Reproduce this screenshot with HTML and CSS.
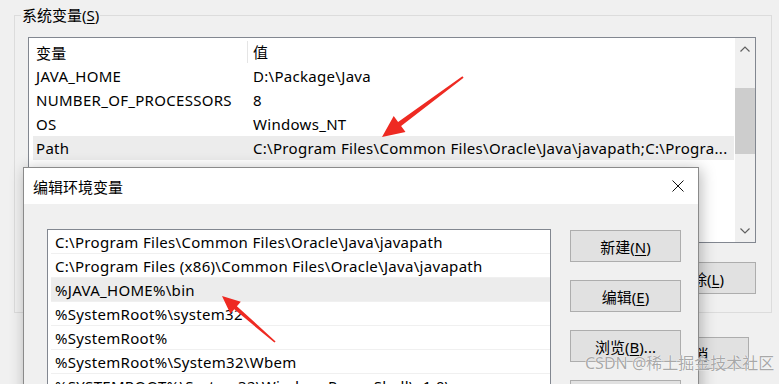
FILE: index.html
```html
<!DOCTYPE html>
<html lang="zh-CN">
<head>
<meta charset="utf-8">
<title>环境变量</title>
<link rel="stylesheet" href="styles.css">
</head>
<body>
<div class="screen">
  <fieldset class="group">
    <legend class="group-title">系统变量(<u>S</u>)</legend>
    <div class="listbox">
      <div class="table">
        <div class="row head"><span class="c1">变量</span><span class="c2">值</span></div>
        <div class="row"><span class="c1">JAVA_HOME</span><span class="c2">D:\Package\Java</span></div>
        <div class="row"><span class="c1">NUMBER_OF_PROCESSORS</span><span class="c2">8</span></div>
        <div class="row"><span class="c1">OS</span><span class="c2">Windows_NT</span></div>
        <div class="row sel"><span class="c1">Path</span><span class="c2">C:\Program Files\Common Files\Oracle\Java\javapath;C:\Progra...</span></div>
      </div>
      <div class="vscroll">
        <div class="sbtn"><svg width="10" height="6" viewBox="0 0 10 6"><path d="M0.5 5.5 L5 1 L9.5 5.5" fill="none" stroke="#606060" stroke-width="1.2"/></svg></div>
        <div class="track"><div class="thumb"></div></div>
        <div class="sbtn"><svg width="10" height="6" viewBox="0 0 10 6"><path d="M0.5 0.5 L5 5 L9.5 0.5" fill="none" stroke="#606060" stroke-width="1.2"/></svg></div>
      </div>
    </div>
    <div class="group-buttons">
      <button class="btn">新建(<u>W</u>)...</button>
      <button class="btn">编辑(<u>I</u>)...</button>
      <button class="btn">删除(<u>L</u>)</button>
    </div>
  </fieldset>
  <div class="footer-buttons">
    <button class="btn">确定</button>
    <button class="btn">取消</button>
  </div>
</div>

<div class="dialog">
  <div class="titlebar">
    <span class="title">编辑环境变量</span>
    <svg class="close" width="12" height="12" viewBox="0 0 12 12"><path d="M0.5 0.5 L11.5 11.5 M11.5 0.5 L0.5 11.5" stroke="#111" stroke-width="1"/></svg>
  </div>
  <div class="dbody">
    <div class="plist">
      <div class="prow">C:\Program Files\Common Files\Oracle\Java\javapath</div>
      <div class="prow">C:\Program Files (x86)\Common Files\Oracle\Java\javapath</div>
      <div class="prow sel">%JAVA_HOME%\bin</div>
      <div class="prow">%SystemRoot%\system32</div>
      <div class="prow">%SystemRoot%</div>
      <div class="prow">%SystemRoot%\System32\Wbem</div>
      <div class="prow">%SYSTEMROOT%\System32\WindowsPowerShell\v1.0\</div>
    </div>
    <div class="dbuttons">
      <button class="btn">新建(<u>N</u>)</button>
      <button class="btn">编辑(<u>E</u>)</button>
      <button class="btn">浏览(<u>B</u>)...</button>
      <button class="btn">删除(<u>D</u>)</button>
    </div>
  </div>
</div>

<svg class="annot" width="779" height="384" viewBox="0 0 779 384">
  <polygon fill="#ee2a22" points="382,137 405.5,131.9 401.1,125.9 463.6,77.8 462.4,76.2 398.1,121.9 393.7,115.9"/>
  <polygon fill="#ee2a22" points="222,296 240.8,301.8 236.9,306.3 275.6,341.4 274.4,342.6 234.3,309.3 230.4,313.8"/>
</svg>

<div class="watermark">CSDN @稀土掘金技术社区</div>
</body>
</html>
```

FILE: styles.css
```css
* { box-sizing: border-box; }

html, body {
  margin: 0;
  padding: 0;
  width: 779px;
  height: 384px;
  overflow: hidden;
  background: #f0f0f0;
  font-family: "Noto Sans", "Noto Sans CJK SC", sans-serif;
  font-size: 15px;
  letter-spacing: 0.3px;
  color: #000;
}

.screen {
  padding: 5px 7px 0 14px;
}

.group {
  margin: 0;
  border: 1px solid #dcdcdc;
  padding: 12px 15px 18px 13px;
  min-width: 0;
}

.group-title {
  margin-left: -7px;
  padding: 0 1px;
  font-size: 15px;
  line-height: 20px;
  letter-spacing: 0;
}

u { text-decoration: underline; text-underline-offset: 2px; }

.listbox {
  display: flex;
  height: 206px;
  border: 1px solid #828790;
  background: #fff;
}

.table {
  flex: 1;
  min-width: 0;
  overflow: hidden;
}

.row {
  display: flex;
  height: 24px;
  align-items: center;
  margin: 0 1px 0 4px;
  white-space: nowrap;
}

.row.head {
  height: 26px;
  padding-top: 2px;
}

.row.sel { background: #ececec; }

.c1 {
  width: 214px;
  flex: none;
  padding-left: 3px;
}

.c2 {
  flex: 1;
  min-width: 0;
  overflow: hidden;
  padding-left: 6px;
}

.head .c2 {
  border-left: 1px solid #e5e5e5;
  height: 22px;
  line-height: 22px;
  padding-left: 5px;
}

.vscroll {
  width: 20px;
  flex: none;
  display: flex;
  flex-direction: column;
  background: #f0f0f0;
}

.sbtn {
  height: 22px;
  display: flex;
  align-items: center;
  justify-content: center;
}

.track { flex: 1; }

.thumb {
  margin-top: 28px;
  height: 66px;
  background: #cdcdcd;
}

.btn {
  width: 111px;
  height: 32px;
  border: 1px solid #adadad;
  background: #e1e1e1;
  font-family: inherit;
  font-size: 15px;
  letter-spacing: 0;
  color: #000;
  padding: 0;
}

.group-buttons {
  display: flex;
  justify-content: flex-end;
  gap: 18px;
  margin-top: 19px;
}

.footer-buttons {
  display: flex;
  justify-content: flex-end;
  gap: 18px;
  margin-top: 24px;
  padding-right: 23px;
}

.dialog {
  position: absolute;
  left: 23px;
  top: 167px;
  width: 676px;
  height: 260px;
  border: 1px solid #8a8a8a;
  background: #f0f0f0;
  box-shadow: 2px 2px 14px rgba(0, 0, 0, 0.28);
}

.titlebar {
  height: 36px;
  background: #fff;
  display: flex;
  align-items: center;
  justify-content: space-between;
  padding: 0 14px 0 9px;
}

.title { font-size: 15px; letter-spacing: 0; }

.dbody {
  display: flex;
  gap: 19px;
  padding: 25px 0 0 23px;
}

.plist {
  width: 504px;
  height: 200px;
  border: 1px solid #828790;
  background: #fff;
  overflow: hidden;
}

.prow {
  height: 24px;
  line-height: 22px;
  padding-top: 1px;
  margin-left: 3px;
  padding-left: 4px;
  border-bottom: 1px solid #f0f0f0;
  white-space: nowrap;
}

.prow.sel { background: #ececec; }

.dbuttons {
  display: flex;
  flex-direction: column;
  gap: 18px;
  padding-top: 1px;
}

.annot {
  position: absolute;
  left: 0;
  top: 0;
  pointer-events: none;
}

.watermark {
  position: absolute;
  left: 585px;
  top: 350px;
  font-size: 16px;
  letter-spacing: 0;
  color: rgba(140, 140, 140, 0.75);
  text-shadow: 0 0 1px #fff, 0 0 1px #fff;
  white-space: nowrap;
}
```
